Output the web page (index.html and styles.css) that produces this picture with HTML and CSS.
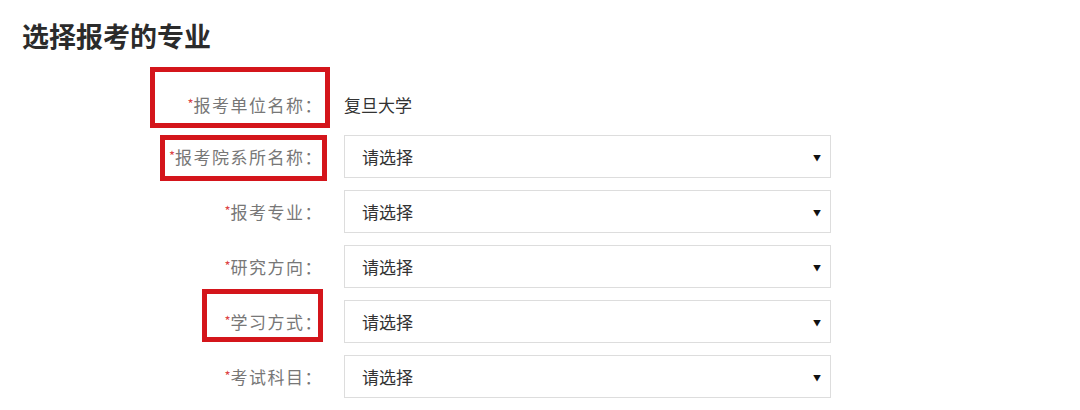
FILE: index.html
```html
<!DOCTYPE html>
<html lang="zh-CN">

<head>
    <meta charset="UTF-8">
    <meta name="viewport" content="width=device-width, initial-scale=1.0">
    <title>选择报考的专业</title>
    <link rel="stylesheet" href="styles.css">
</head>

<body>

    <h2 class="title">选择报考的专业</h2>

    <form class="apply-form">
        <div class="row row--first">
            <label class="label label--mark1"><em>*</em>报考单位名称：</label>
            <div class="value">复旦大学</div>
        </div>
        <div class="row">
            <label class="label label--mark2" for="dept"><em>*</em>报考院系所名称：</label>
            <div class="select-wrap">
                <select id="dept"><option>请选择</option></select>
            </div>
        </div>
        <div class="row">
            <label class="label" for="major"><em>*</em>报考专业：</label>
            <div class="select-wrap">
                <select id="major"><option>请选择</option></select>
            </div>
        </div>
        <div class="row">
            <label class="label" for="direction"><em>*</em>研究方向：</label>
            <div class="select-wrap">
                <select id="direction"><option>请选择</option></select>
            </div>
        </div>
        <div class="row">
            <label class="label label--mark3" for="mode"><em>*</em>学习方式：</label>
            <div class="select-wrap">
                <select id="mode"><option>请选择</option></select>
            </div>
        </div>
        <div class="row">
            <label class="label" for="subject"><em>*</em>考试科目：</label>
            <div class="select-wrap">
                <select id="subject"><option>请选择</option></select>
            </div>
        </div>
    </form>

</body>

</html>
```

FILE: styles.css
```css
* {
    box-sizing: border-box;
}

body {
    margin: 0;
    font-family: "Noto Sans CJK SC", "Noto Sans", sans-serif;
    color: #333;
    background: #fff;
}

.title {
    margin: 0;
    padding: 18px 0 0 22px;
    height: 79px;
    font-size: 27px;
    font-weight: bold;
    line-height: 36px;
    color: #2b2b2b;
}

.apply-form {
    margin: 0;
}

.row {
    display: grid;
    grid-template-columns: 323px 487px;
    column-gap: 21px;
    align-items: center;
    height: 55px;
}

.row--first {
    height: 50px;
}

.label {
    position: relative;
    justify-self: end;
    font-size: 17px;
    letter-spacing: 1.5px;
    color: #777;
    white-space: nowrap;
}

.label em {
    font-style: normal;
    color: #d44;
    font-size: 13px;
    letter-spacing: 0;
    vertical-align: 3px;
}

/* red annotation frames */
.label--mark1::after,
.label--mark2::after,
.label--mark3::after {
    content: "";
    position: absolute;
    border: 5px solid #d4151b;
}

.label--mark1::after {
    left: -37px;
    right: -7px;
    top: -25px;
    bottom: -11px;
}

.label--mark2::after {
    left: -9px;
    right: -4px;
    top: -9px;
    bottom: -12px;
}

.label--mark3::after {
    left: -22px;
    right: 0;
    top: -20px;
    bottom: -8px;
}

.value {
    font-size: 17px;
    color: #333;
}

.select-wrap {
    position: relative;
    height: 43px;
}

.select-wrap::after {
    content: "▼";
    position: absolute;
    right: 10px;
    top: 50%;
    transform: translateY(-50%);
    font-size: 8px;
    color: #111;
    pointer-events: none;
}

select {
    appearance: none;
    -webkit-appearance: none;
    width: 100%;
    height: 100%;
    padding: 0 30px 0 17px;
    border: 1px solid #ddd;
    border-radius: 0;
    background: #fff;
    font-family: inherit;
    font-size: 17px;
    color: #333;
}
```
